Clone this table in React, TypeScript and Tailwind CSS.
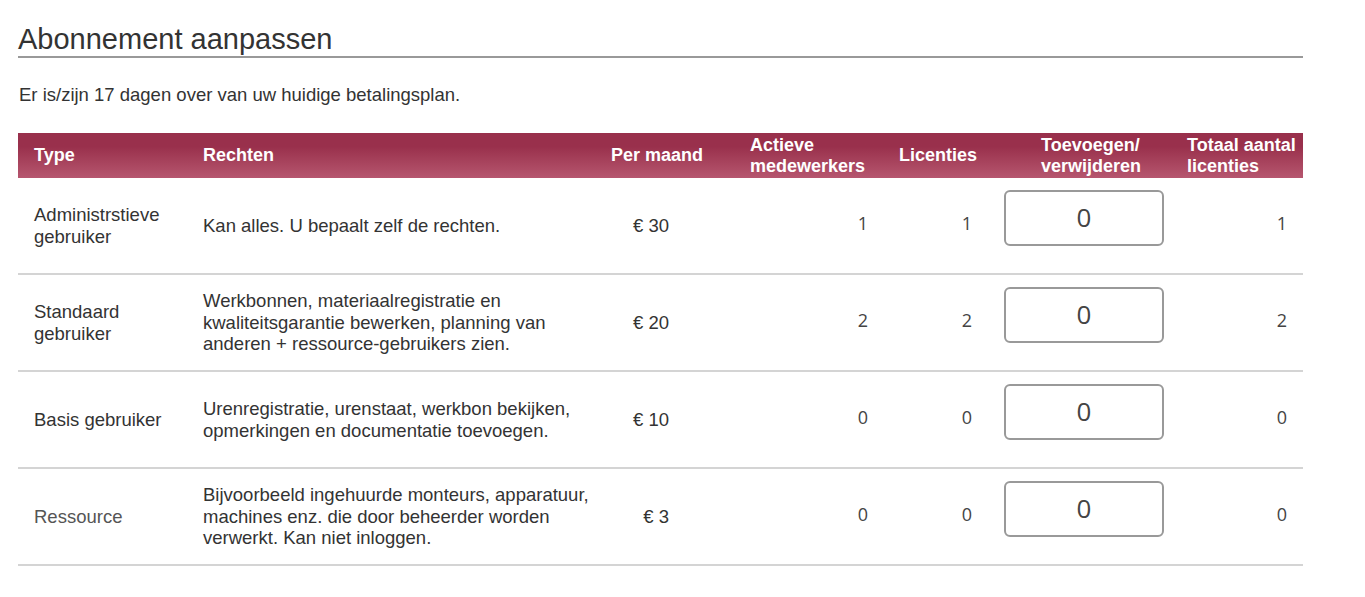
const rows = [
  {
    type: "Administrstieve gebruiker",
    rights: "Kan alles. U bepaalt zelf de rechten.",
    price: "€ 30",
    active: 1,
    licenses: 1,
    total: 1,
    muted: false,
  },
  {
    type: "Standaard gebruiker",
    rights: "Werkbonnen, materiaalregistratie en kwaliteitsgarantie bewerken, planning van anderen + ressource-gebruikers zien.",
    price: "€ 20",
    active: 2,
    licenses: 2,
    total: 2,
    muted: false,
  },
  {
    type: "Basis gebruiker",
    rights: "Urenregistratie, urenstaat, werkbon bekijken, opmerkingen en documentatie toevoegen.",
    price: "€ 10",
    active: 0,
    licenses: 0,
    total: 0,
    muted: false,
  },
  {
    type: "Ressource",
    rights: "Bijvoorbeeld ingehuurde monteurs, apparatuur, machines enz. die door beheerder worden verwerkt. Kan niet inloggen.",
    price: "€ 3",
    active: 0,
    licenses: 0,
    total: 0,
    muted: true,
  },
]

export default function App() {
  return (
    <div className="min-h-screen bg-white pl-[18px] pr-[62px] pt-[23px] font-['Liberation_Sans',Arial,sans-serif] text-[#333]">
      <h1 className="border-b-2 border-[#999] text-[29px] leading-[32px] pb-[1px]">Abonnement aanpassen</h1>

      <p className="mt-[25px] pl-[1px] text-[18.5px] leading-[24px]">
        Er is/zijn 17 dagen over van uw huidige betalingsplan.
      </p>

      <div className="mt-[26px]">
        {/* header */}
        <div className="grid h-[45px] grid-cols-[169px_411px_136px_150px_104px_183px_132px] items-center bg-gradient-to-b from-[#99304c] from-30% to-[#b6566f] text-[18px] font-bold leading-[21px] text-white">
          <div className="pl-4">Type</div>
          <div className="pl-4">Rechten</div>
          <div className="pl-[13px] whitespace-nowrap">Per maand</div>
          <div className="pl-4">
            Actieve
            <br />
            medewerkers
          </div>
          <div className="pl-[15px]">Licenties</div>
          <div className="pl-[53px]">
            Toevoegen/
            <br />
            verwijderen
          </div>
          <div className="pl-4">
            Totaal aantal
            <br />
            licenties
          </div>
        </div>

        {rows.map((r) => (
          <div
            key={r.type}
            className="grid h-[97px] grid-cols-[169px_411px_136px_150px_104px_183px_132px] items-center border-b-2 border-[#d4d4d4] text-[18.5px] leading-[21.5px]"
          >
            <div className={"pl-4 pr-4 " + (r.muted ? "text-[#555]" : "")}>{r.type}</div>
            <div className="pl-4">{r.rights}</div>
            <div className="pr-[65px] text-right">{r.price}</div>
            <div className="pr-4 pb-[3px] text-right font-['Open_Sans',sans-serif] text-[18px] text-[#444]">{r.active}</div>
            <div className="pr-4 pb-[3px] text-right font-['Open_Sans',sans-serif] text-[18px] text-[#444]">{r.licenses}</div>
            <div className="pl-4">
              <div className="mb-4 flex h-[56px] w-[160px] items-center justify-center rounded-[6px] border-2 border-[#999] font-['Open_Sans',sans-serif] text-[26px] text-[#444]">
                0
              </div>
            </div>
            <div className="pr-4 pb-[3px] text-right font-['Open_Sans',sans-serif] text-[18px] text-[#444]">{r.total}</div>
          </div>
        ))}
      </div>
    </div>
  )
}
